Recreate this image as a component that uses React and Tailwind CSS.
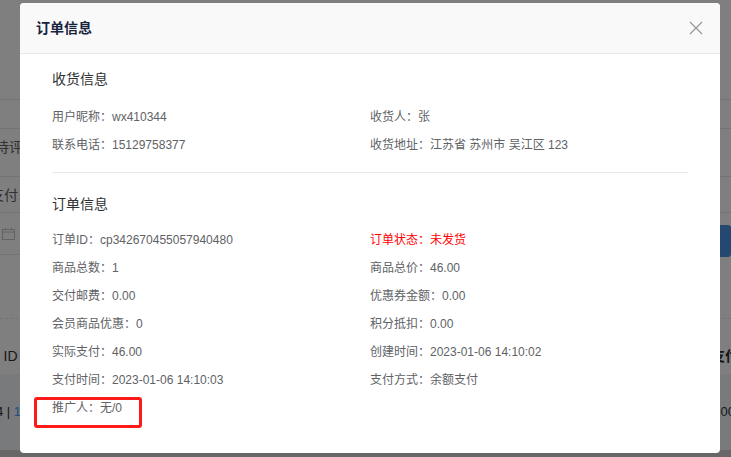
import React from "react";

const shipping = [
  ["用户昵称：wx410344", "收货人：张"],
  ["联系电话：15129758377", "收货地址：江苏省 苏州市 吴江区 123"],
];

const order = [
  ["订单ID：cp342670455057940480", "订单状态：未发货"],
  ["商品总数：1", "商品总价：46.00"],
  ["交付邮费：0.00", "优惠券金额：0.00"],
  ["会员商品优惠：0", "积分抵扣：0.00"],
  ["实际支付：46.00", "创建时间：2023-01-06 14:10:02"],
  ["支付时间：2023-01-06 14:10:03", "支付方式：余额支付"],
  ["推广人：无/0", ""],
];

function BackgroundPage() {
  return (
    <div className="flex h-full flex-col bg-white text-[14px] leading-[20px] text-[#606266]">
      <div className="h-[100px] shrink-0 border-b border-[#e6e6e6]" />
      <div className="h-[29px] shrink-0 border-b border-[#e6e6e6]" />
      <div className="flex h-[48px] shrink-0 items-start border-b border-[#e6e6e6] pt-[8px]">
        <span className="-ml-[5px]">待评</span>
      </div>
      <div className="flex h-[36px] shrink-0 items-center border-b border-[#e6e6e6]">
        <span className="-ml-[10px]">支付</span>
      </div>
      <div className="flex h-[42px] shrink-0 items-center justify-between border-b border-[#e6e6e6]">
        <svg className="ml-[2px]" width="13" height="13" viewBox="0 0 13 13" fill="none" stroke="#c0c4cc" strokeWidth="1">
          <rect x="0.5" y="2.5" width="12" height="10" />
          <line x1="0.5" y1="5" x2="12.5" y2="5" />
          <line x1="3.5" y1="0.5" x2="3.5" y2="3" />
          <line x1="9.5" y1="0.5" x2="9.5" y2="3" />
        </svg>
        <div className="mt-[14px] h-[32px] w-[40px] rounded-[3px] bg-[#4a8fe0]" />
      </div>
      <div className="h-[64px] shrink-0 border-b border-dashed border-[#e6e6e6]" />
      <div className="flex h-[55px] shrink-0 items-start justify-between pt-[27px]">
        <span className="-ml-[4px] text-[#303133]">| ID</span>
        <span className="-mr-[8px] font-bold text-[#303133]">支付</span>
      </div>
      <div className="flex h-[76px] shrink-0 items-center justify-between bg-[#f0f4f8]">
        <span className="-ml-[4px] text-[13px] text-[#303133]">
          4 | <span className="text-[#409eff]">1</span>
        </span>
        <span className="-mr-[4px] text-[13px] text-[#303133]">00</span>
      </div>
      <div className="flex-1 bg-[#cfcfcf]" />
    </div>
  );
}

function InfoGrid({ rows, last, className }) {
  return (
    <div className={`grid grid-cols-2 ${className}`}>
      {rows.map(([a, b], i) => (
        <React.Fragment key={i}>
          <div className="relative h-[28px] leading-[28px]">
            {a}
            {last && i === rows.length - 1 && (
              <div className="absolute -left-[18px] top-[3px] h-[31px] w-[108px] rounded-[3px] border-[3px] border-[#ff1a1a]" />
            )}
          </div>
          <div className={`h-[28px] leading-[28px] ${a.startsWith("订单ID") ? "text-[#ff0000]" : ""}`}>
            {b}
          </div>
        </React.Fragment>
      ))}
    </div>
  );
}

export default function App() {
  return (
    <div
      className="relative h-[457px] w-[731px] overflow-hidden"
      style={{ fontFamily: '"Liberation Sans", "Noto Sans CJK SC", sans-serif' }}
    >
      <BackgroundPage />
      <div className="absolute inset-0 bg-black/50" />

      {/* dialog */}
      <div className="absolute left-[20px] top-[3px] w-[700px] overflow-hidden rounded-[4px] bg-white">
        <div className="flex h-[51px] items-center justify-between border-b border-[#e8e8e8] bg-[#f9f9f9] pl-[16px] pr-[17px]">
          <span className="text-[14px] font-bold text-[#17233d]">订单信息</span>
          <svg width="14" height="14" viewBox="0 0 14 14" stroke="#999" strokeWidth="1.2" fill="none">
            <line x1="1" y1="1" x2="13" y2="13" />
            <line x1="13" y1="1" x2="1" y2="13" />
          </svg>
        </div>

        <div className="px-[32px] pb-[31px] pt-[15px] text-[12px] text-[#606266]">
          <div className="h-[20px] text-[14px] leading-[20px] text-[#303133]">收货信息</div>
          <InfoGrid rows={shipping} className="mt-[14px]" />
          <div className="mt-[13px] h-px bg-[#e8e8e8]" />
          <div className="mt-[21px] h-[20px] text-[14px] leading-[20px] text-[#303133]">订单信息</div>
          <InfoGrid rows={order} last className="mt-[12px]" />
        </div>
      </div>
    </div>
  );
}
